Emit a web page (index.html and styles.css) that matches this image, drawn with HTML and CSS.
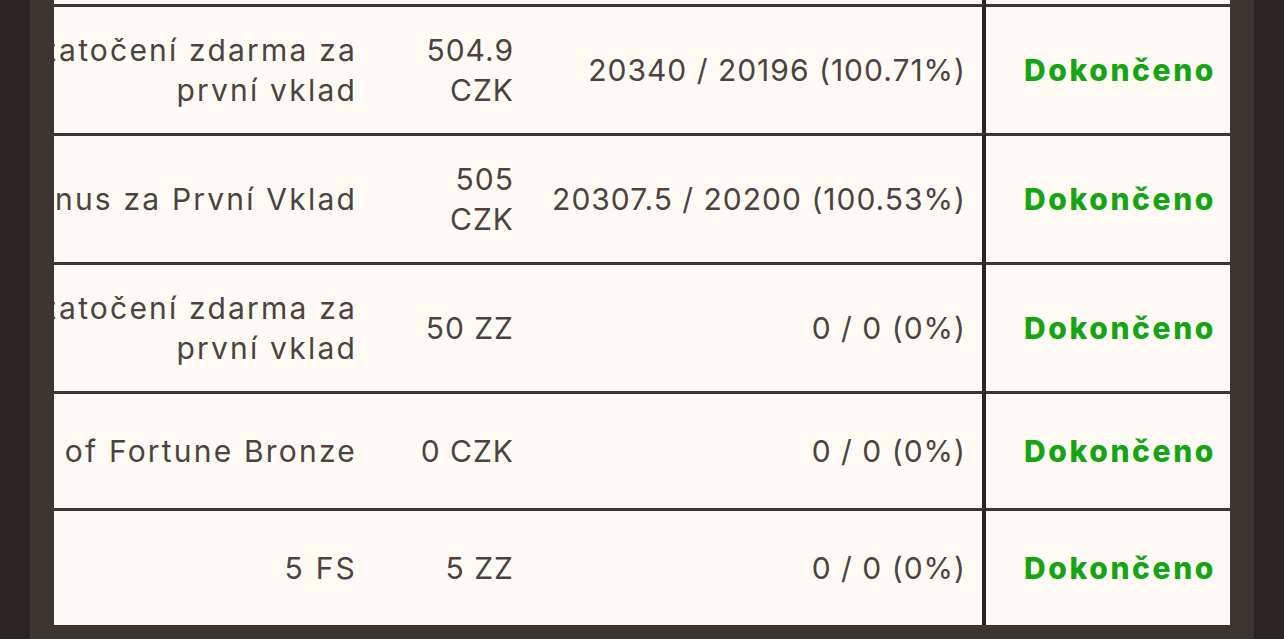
FILE: index.html
```html
<!DOCTYPE html>
<html lang="cs">
<head>
<meta charset="utf-8">
<title>Bonusy</title>
<link rel="stylesheet" href="styles.css">
</head>
<body>
<div class="page">
  <div class="panel">
    <div class="scroller">
      <table class="bonus-table">
        <colgroup>
          <col class="c-name">
          <col class="c-amount">
          <col class="c-progress">
          <col class="c-status">
        </colgroup>
        <tbody>
          <tr class="row-prev">
            <td class="name">Bonus za druhý vklad</td>
            <td class="amount">300.5 CZK</td>
            <td class="progress">12000 / 12000 (100%)</td>
            <td class="status">Dokončeno</td>
          </tr>
          <tr>
            <td class="name">50 zatočení zdarma za první vklad</td>
            <td class="amount">504.9 CZK</td>
            <td class="progress">20340 / 20196 (100.71%)</td>
            <td class="status">Dokončeno</td>
          </tr>
          <tr>
            <td class="name">Bonus za První Vklad</td>
            <td class="amount">505 CZK</td>
            <td class="progress">20307.5 / 20200 (100.53%)</td>
            <td class="status">Dokončeno</td>
          </tr>
          <tr>
            <td class="name">50 zatočení zdarma za první vklad</td>
            <td class="amount">50 ZZ</td>
            <td class="progress">0 / 0 (0%)</td>
            <td class="status">Dokončeno</td>
          </tr>
          <tr class="single">
            <td class="name">Wheel of Fortune Bronze</td>
            <td class="amount">0 CZK</td>
            <td class="progress">0 / 0 (0%)</td>
            <td class="status">Dokončeno</td>
          </tr>
          <tr class="single">
            <td class="name">5 FS</td>
            <td class="amount">5 ZZ</td>
            <td class="progress">0 / 0 (0%)</td>
            <td class="status">Dokončeno</td>
          </tr>
        </tbody>
      </table>
    </div>
  </div>
</div>
</body>
</html>
```
FILE: styles.css
```css
* { box-sizing: border-box; }
html, body {
  margin: 0;
  padding: 0;
  background: #2a2524;
  height: 100%;
  overflow: hidden;
}
.page {
  padding: 0 30px;
  height: 100%;
}
.panel {
  background: #3c3531;
  padding: 0 24px;
  height: 100%;
}
.scroller {
  display: flex;
  justify-content: flex-end;
  overflow: hidden;
  height: 625px;
  background: #3c3531;
}
.bonus-table {
  flex: 0 0 auto;
  width: 1329px;
  table-layout: fixed;
  border-collapse: separate;
  border-spacing: 0;
  margin-top: -125px;
  align-self: flex-start;
  background: #fffaf3;
  font-family: "Inter", "Open Sans", sans-serif;
  font-size: 30px;
  line-height: 40px;
  letter-spacing: 1px;
  color: #4a4440;
}
.c-name { width: 470px; }
.c-amount { width: 159px; }
.c-progress { width: 456px; }
.c-status { width: 244px; }
.bonus-table td {
  border-top: 3px solid #3c3531;
  padding: 23px 16px;
  text-align: right;
  vertical-align: middle;
}
.bonus-table tr.single td {
  padding-top: 37px;
  padding-bottom: 37px;
}
.bonus-table td.name {
  letter-spacing: 2.2px;
  padding-right: 14px;
}
.bonus-table td.amount {
  padding-left: 24px;
}
.bonus-table td.progress {
  border-right: 4px solid #2a2523;
  padding-right: 16px;
}
.bonus-table td.status {
  color: #14a514;
  font-weight: 800;
  letter-spacing: 2.6px;
  padding-right: 14px;
}
```
